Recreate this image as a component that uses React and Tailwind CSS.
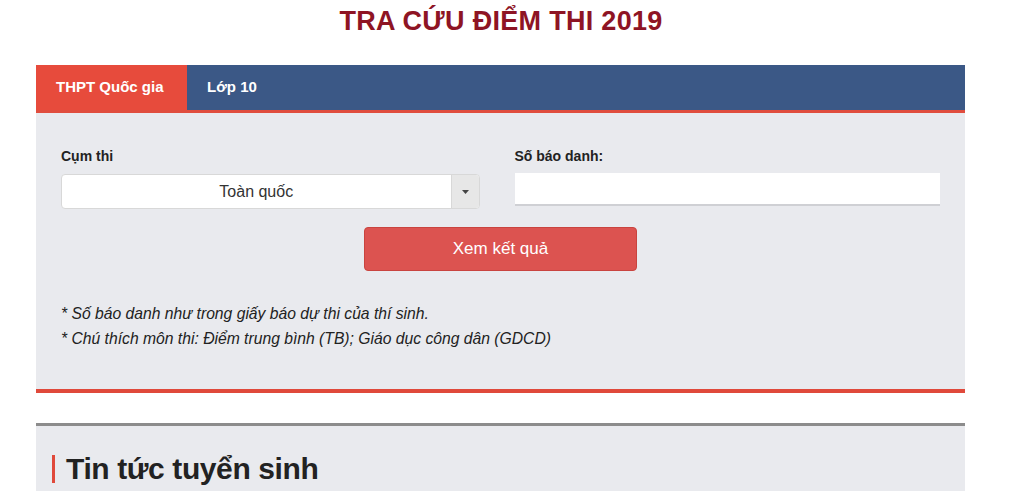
import React from "react";

export default function App() {
  return (
    <div className="w-[1024px] h-[491px] overflow-hidden bg-white" style={{ fontFamily: '"Liberation Sans", Arial, sans-serif' }}>
      <h1 className="text-center text-[27px] font-bold text-[#8e1424] pt-[3px] pr-[22px] h-[65px] leading-[36px] tracking-[0.3px]">TRA CỨU ĐIỂM THI 2019</h1>
      <div className="mx-[36px] w-[929px]">
        <div className="flex h-[45px] bg-[#3b5886]">
          <div className="bg-[#e74b3c] text-white font-bold text-[15px] flex items-center px-[20px] w-[151px]">THPT Quốc gia</div>
          <div className="text-white font-bold text-[15px] flex items-center px-[20px]">Lớp 10</div>
        </div>
        <div className="h-[3px] bg-[#e04d3e]" />
        <div className="bg-[#e9eaee] px-[25px] pt-[35px] h-[280px] border-b-[4px] border-[#e0493b]">
          <div className="flex">
            <div className="w-[419px]">
              <div className="text-[14px] font-bold text-[#222] leading-[16px] mb-[10px]">Cụm thi</div>
              <div className="flex h-[35px] bg-white rounded-[4px] border border-[#d8d8d8] overflow-hidden">
                <div className="flex-1 flex items-center justify-center text-[16px] text-[#333]">Toàn quốc</div>
                <div className="w-[28px] bg-[#e7e7e7] border-l border-[#d8d8d8] flex items-center justify-center">
                  <svg width="7" height="4" viewBox="0 0 7 4"><path d="M0 0 L7 0 L3.5 4 Z" fill="#444" /></svg>
                </div>
              </div>
            </div>
            <div className="ml-[35px] w-[426px]">
              <div className="text-[14px] font-bold text-[#222] leading-[16px] mb-[9px]">Số báo danh:</div>
              <div className="h-[33px] bg-white border-b-[2px] border-[#cfd0d4]" />
            </div>
          </div>
          <div className="flex justify-center mt-[18px] ml-[-25px] mr-[-25px]">
            <button className="w-[273px] h-[44px] bg-[#dc5350] rounded-[4px] border border-[#c9443f] text-white text-[17px] flex items-center justify-center">Xem kết quả</button>
          </div>
          <div className="mt-[30px] text-[15.7px] italic text-[#222] leading-[25px]">
            <div>* Số báo danh như trong giấy báo dự thi của thí sinh.</div>
            <div>* Chú thích môn thi: Điểm trung bình (TB); Giáo dục công dân (GDCD)</div>
          </div>
        </div>
        <div className="h-[30px]" />
        <div className="border-t-[3px] border-[#8c8c8c] bg-[#e9eaee] h-[80px] pt-[26px] pl-[16px]">
          <div className="flex items-center">
            <div className="w-[3px] h-[28px] bg-[#e0493b] mr-[11px]" />
            <div className="text-[30px] font-bold text-[#222] leading-[34px] tracking-[-0.4px]">Tin tức tuyển sinh</div>
          </div>
        </div>
      </div>
    </div>
  );
}
